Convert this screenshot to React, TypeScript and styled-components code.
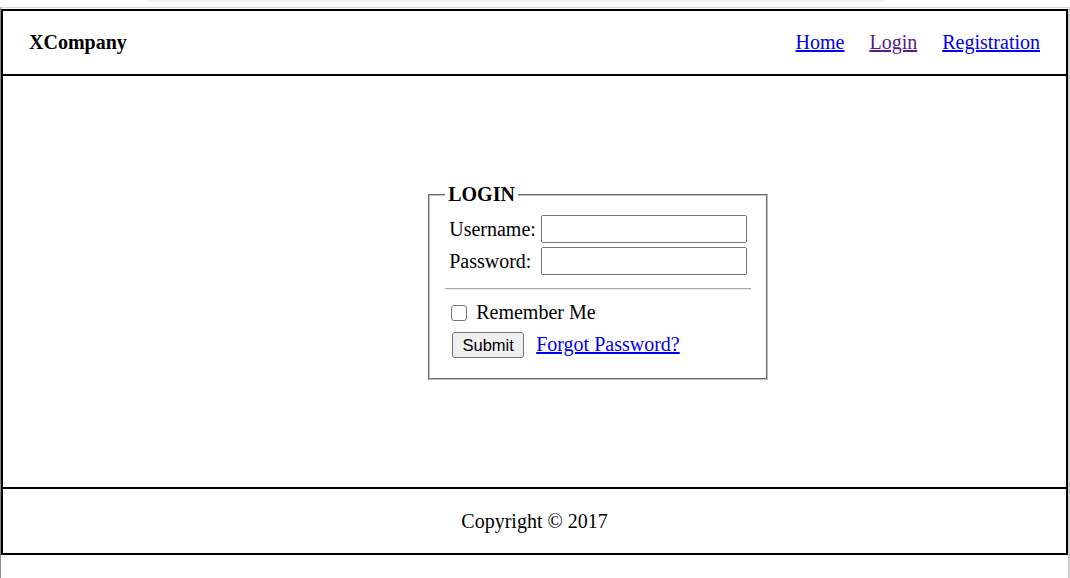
import React from "react";
import styled, { createGlobalStyle } from "styled-components";

const Global = createGlobalStyle`
  html, body { margin: 0; padding: 0; background: #ffffff; }
  body { font-family: "Liberation Serif", "Times New Roman", serif; font-size: 20px; color: #000; }
  * { box-sizing: border-box; }
`;

const TopStrip = styled.div`
  height: 7px;
  display: flex;
`;

const TopBar = styled.div`
  margin-left: 147px;
  width: 738px;
  height: 2px;
  background: #f0f0f0;
  border-radius: 0 0 4px 4px;
`;

const Frame = styled.div`
  width: 1070px;
  min-height: calc(100vh - 7px);
  border-top: 1px solid #d8d8d8;
  border-left: 1px solid #8a8a8a;
  border-right: 2px solid #cdcdcd;
  padding-top: 1px;
`;

const Page = styled.div`
  width: 1067px;
  height: 546px;
  border: 2px solid #000;
  display: grid;
  grid-template-rows: 63px 2px 411px 2px 64px;
`;

const Divider = styled.div`
  background: #000;
`;

const Header = styled.header`
  display: flex;
  align-items: center;
  justify-content: space-between;
  padding: 0 26px;
`;

const Brand = styled.div`
  font-weight: bold;
  font-size: 20px;
`;

const Nav = styled.nav`
  display: flex;
  gap: 25px;
`;

const NavLink = styled.a<{ $visited?: boolean }>`
  color: ${(p) => (p.$visited ? "#551a8b" : "#0000ee")};
  text-decoration: underline;
  font-size: 20px;
`;

const Main = styled.main`
  display: flex;
  align-items: center;
`;

const Fieldset = styled.fieldset`
  margin: 0 0 0 40%;
  width: 340px;
  border: 2px groove #c0c0c0;
  padding: 9px 15px 20px;
  min-width: 0;
`;

const Legend = styled.legend`
  font-weight: bold;
  font-size: 20px;
  padding: 0 3px;
`;

const FieldGrid = styled.div`
  display: grid;
  grid-template-columns: auto 206px;
  justify-content: start;
  column-gap: 5px;
  row-gap: 4px;
  align-items: center;
  margin-left: 4px;
`;

const Label = styled.label`
  font-size: 20px;
`;

const TextInput = styled.input`
  width: 206px;
  height: 28px;
  border: 1px solid #767676;
  border-radius: 2px;
  padding: 1px 3px;
  font-size: 16px;
`;

const Rule = styled.hr`
  margin: 13px 0 0;
  height: 0;
  border: none;
  border-top: 1px solid #a8a8a8;
  border-bottom: 1px solid #ececec;
`;

const CheckRow = styled.label`
  display: flex;
  align-items: center;
  margin-top: 11px;
  height: 23px;
  font-size: 20px;
`;

const Check = styled.input`
  appearance: none;
  width: 16px;
  height: 16px;
  margin: 0 9px 0 6px;
  border: 1px solid #767676;
  border-radius: 3px;
  background: #fff;
`;

const ActionRow = styled.div`
  display: flex;
  align-items: center;
  margin-top: 8px;
  padding-left: 7px;
  gap: 12px;
`;

const SubmitButton = styled.button`
  width: 72px;
  height: 26px;
  background: #efefef;
  border: 1px solid #767676;
  border-radius: 3px;
  font-family: "Liberation Sans", Arial, sans-serif;
  font-size: 16.5px;
  color: #000;
  padding: 0;
`;

const TextLink = styled.a`
  color: #0000ee;
  text-decoration: underline;
  font-size: 20px;
  margin-top: -2px;
`;

const Footer = styled.footer`
  display: flex;
  align-items: center;
  justify-content: center;
  font-size: 20px;
`;

export default function App() {
  return (
    <>
      <Global />
      <TopStrip>
        <TopBar />
      </TopStrip>
      <Frame>
        <Page>
          <Header>
            <Brand>XCompany</Brand>
            <Nav>
              <NavLink href="#">Home</NavLink>
              <NavLink href="#" $visited>
                Login
              </NavLink>
              <NavLink href="#">Registration</NavLink>
            </Nav>
          </Header>
          <Divider />
          <Main>
            <Fieldset>
              <Legend>LOGIN</Legend>
              <FieldGrid>
                <Label htmlFor="u">Username:</Label>
                <TextInput id="u" type="text" />
                <Label htmlFor="p">Password:</Label>
                <TextInput id="p" type="password" />
              </FieldGrid>
              <Rule />
              <CheckRow>
                <Check type="checkbox" />
                Remember Me
              </CheckRow>
              <ActionRow>
                <SubmitButton type="button">Submit</SubmitButton>
                <TextLink href="#">Forgot Password?</TextLink>
              </ActionRow>
            </Fieldset>
          </Main>
          <Divider />
          <Footer>Copyright © 2017</Footer>
        </Page>
      </Frame>
    </>
  );
}
